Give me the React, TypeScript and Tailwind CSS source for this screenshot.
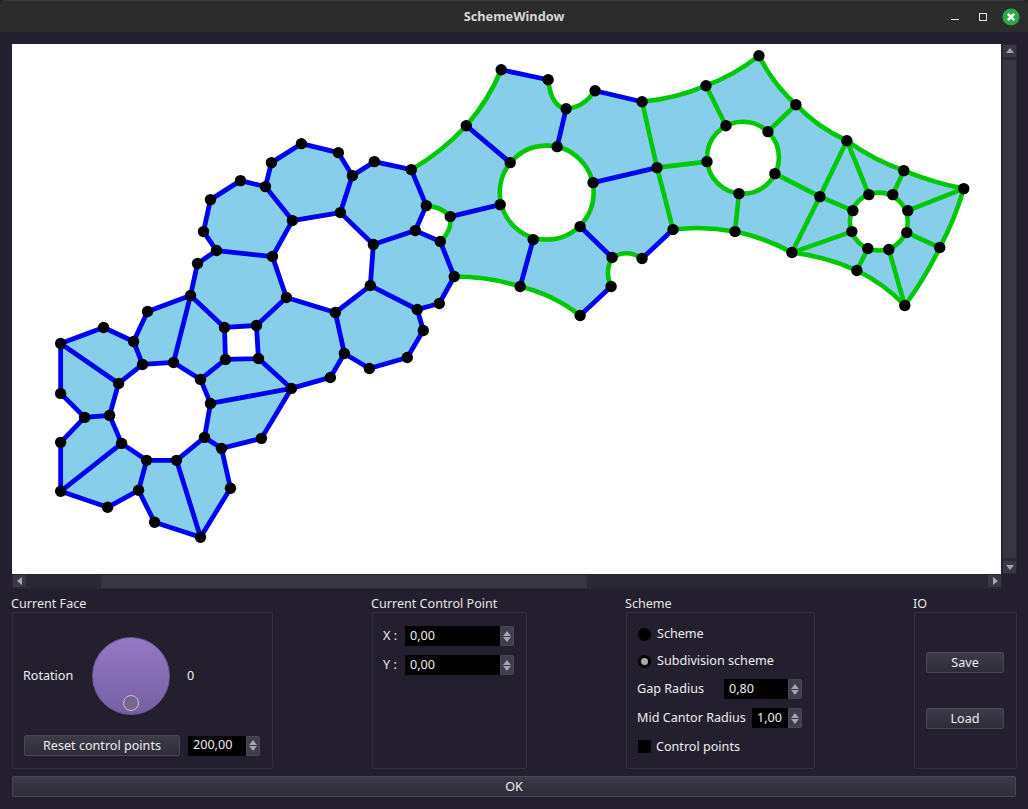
import React from "react";

const FILL =
  "M60 343L103 327L133 341L147 311L190 295L197 263L216 250L203 231L210 199L240 180L265 186L271 162L301 143L338 152L352 175L374 161L411 169Q442 151 466 125Q488 100 501 69L548 79Q551 106 566 108Q583 107 595 90L642 101Q676 98 706 85Q735 74 759 55Q773 83 796 104Q818 127 847 140Q873 159 904 170Q933 182 964 188Q955 219 940 247Q925 278 905 305Q884 283 857 270Q826 256 792 252Q765 237 735 231Q704 225 673 229L642 258Q627 248 612 257Q604 272 611 286L580 315Q553 294 520 286Q489 276 454 276L439 303L417 309L423 330L407 357L369 368L344 353L330 377L291 388L261 438L221 448L230 488L200 537L154 522L138 490L107 507L60 491L60 442L84 417L60 393Z" +
  "M118 383L142 364L173 362L200 379L210 403L204 437L176 460L146 460L121 443L109 415Z" +
  "M292 220L340 212L373 244L370 285L335 312L286 297L272 256Z" +
  "M224 327L256 325L258 358L225 359Z" +
  "M426 205Q441 206 450 216Q452 230 440 241L415 230Z" +
  "M499.500 192A47 47 0 1 0 593.500 192A47 47 0 1 0 499.500 192Z" +
  "M707 157A36 36 0 1 0 779 157A36 36 0 1 0 707 157Z" +
  "M850 221A29 29 0 1 0 908 221A29 29 0 1 0 850 221Z";

const BLUE =
  "M60 491L60 442L84 417L60 393L60 343L103 327L133 341L147 311L190 295L197 263L216 250L203 231L210 199L240 180L265 186L271 162L301 143L338 152L352 175L374 161L411 169L426 205L415 230L440 241L454 276L439 303L417 309L423 330L407 357L369 368L344 353L330 377L291 388L261 438L221 448L230 488L200 537L154 522L138 490L107 507L60 491" +
  "M60 343L118 383L142 364L173 362L200 379L210 403L204 437L176 460L146 460L121 443L109 415L118 383M133 341L142 364M84 417L109 415M121 443L60 491M146 460L138 490M176 460L200 537M204 437L221 448M210 403L291 388M200 379L225 359L258 358L291 388M225 359L224 327L256 325L258 358M224 327L190 295L173 362M256 325L286 297L272 256L292 220L340 212L373 244L370 285L335 312L286 297M272 256L216 250M292 220L265 186M340 212L352 175M373 244L415 230M370 285L417 309M335 312L344 353" +
  "M450 216L500 204M510 162L466 125M501 69L548 79M557 146L566 108M595 90L642 101M593 182L657 167M580 226L612 257M642 258L673 229M533 239L520 286M611 286L580 315";

const GREEN =
  "M411 169Q442 151 466 125Q488 100 501 69M548 79Q551 106 566 108Q583 107 595 90M642 101Q676 98 706 85Q735 74 759 55Q773 83 796 104Q818 127 847 140Q873 159 904 170Q933 182 964 188Q955 219 940 247Q925 278 905 305Q884 283 857 270Q826 256 792 252Q765 237 735 231Q704 225 673 229M612 257Q627 248 642 258M612 257Q604 272 611 286M580 315Q553 294 520 286Q489 276 454 276M426 205Q441 206 450 216Q452 230 440 241" +
  "M642 101L657 167L673 229M657 167L707 161M706 85L726 125M768 131L796 104M775 173L820 196L853 210M847 140L820 196L792 252M847 140L869 194M904 170L893 194M908 210L964 188M907 232L940 247M889 249L905 305M868 248L857 270M852 231L792 252M739 193L735 231";

const DOTS = [
  [60, 343], [103, 327], [133, 341], [147, 311], [190, 295], [224, 327], [256, 325], [225, 359], [258, 358], [286, 297],
  [291, 388], [200, 379], [173, 362], [142, 364], [118, 383], [60, 393], [84, 417], [109, 415], [121, 443], [60, 442],
  [60, 491], [107, 507], [138, 490], [146, 460], [176, 460], [204, 437], [210, 403], [221, 448], [261, 438], [230, 488],
  [200, 537], [154, 522], [301, 143], [338, 152], [352, 175], [374, 161], [411, 169], [426, 205], [415, 230], [440, 241],
  [450, 216], [454, 276], [439, 303], [417, 309], [423, 330], [407, 357], [369, 368], [344, 353], [335, 312], [370, 285],
  [373, 244], [340, 212], [292, 220], [265, 186], [271, 162], [240, 180], [210, 199], [203, 231], [216, 250], [272, 256],
  [197, 263], [330, 377], [501, 69], [548, 79], [566, 108], [595, 90], [642, 101], [657, 167], [673, 229], [642, 258],
  [612, 257], [611, 286], [580, 315], [520, 286], [533, 239], [580, 226], [593, 182], [557, 146], [510, 162], [500, 204],
  [466, 125], [759, 55], [706, 85], [796, 104], [726, 125], [768, 131], [847, 140], [904, 170], [964, 188], [707, 161],
  [775, 173], [739, 193], [820, 196], [869, 194], [893, 194], [908, 210], [853, 210], [852, 231], [907, 232], [868, 248],
  [889, 249], [940, 247], [857, 270], [905, 305], [792, 252], [735, 231],
];

const Arrow = ({ dir }: { dir: "up" | "down" | "left" | "right" }) => {
  const pts = {
    up: "0,6 8,6 4,1",
    down: "0,2 8,2 4,7",
    left: "6,0 6,8 1,4",
    right: "2,0 2,8 7,4",
  }[dir];
  return (
    <svg width="8" height="8" viewBox="0 0 8 8">
      <polygon points={pts} fill="#a5a3ad" />
    </svg>
  );
};

const ScrollButton = ({ dir }: { dir: "up" | "down" | "left" | "right" }) => (
  <div className="w-[15px] h-[14px] shrink-0 flex items-center justify-center bg-[#3a3746] border border-[#2a2734]">
    <Arrow dir={dir} />
  </div>
);

const Spin = ({ value, width }: { value: string; width: string }) => (
  <div className="flex h-[20px]">
    <div className={`${width} bg-black text-[#eeeeee] pl-[5px] flex items-center`}>{value}</div>
    <div className="w-[14px] flex flex-col items-center justify-center gap-[1px] bg-[#3f3c4b] border border-[#4a4757] rounded-r-[2px]">
      <svg width="8" height="5" viewBox="0 0 8 5">
        <polygon points="0,5 8,5 4,0" fill="#a5a3ad" />
      </svg>
      <svg width="8" height="5" viewBox="0 0 8 5">
        <polygon points="0,0 8,0 4,5" fill="#a5a3ad" />
      </svg>
    </div>
  </div>
);

const Button = ({ label, className }: { label: string; className: string }) => (
  <button
    className={`${className} flex items-center justify-center pt-px rounded-[2px] border border-[#4a4757] bg-gradient-to-b from-[#3d3a49] to-[#2f2c3a] text-[#eeeeee]`}
  >
    {label}
  </button>
);

const Group = ({ title, className, children }: { title: string; className: string; children: React.ReactNode }) => (
  <div className={`${className} flex flex-col`}>
    <div className="h-[18px] -ml-px pt-px leading-[18px] text-[#e6e6e6]">{title}</div>
    <div className="h-[157px] border border-[#34313f] rounded-[2px]">{children}</div>
  </div>
);

const Radio = ({ label, checked }: { label: string; checked?: boolean }) => (
  <div className="flex items-center h-[20px]">
    <div className="w-[13px] h-[13px] rounded-full bg-black flex items-center justify-center">
      {checked && <div className="w-[7px] h-[7px] rounded-full bg-[#a9a9a9]" />}
    </div>
    <span className="ml-[6px] pt-px">{label}</span>
  </div>
);

export default function App() {
  return (
    <div
      className="w-[1028px] h-[809px] overflow-hidden flex flex-col bg-[#231f2e] text-[12.600px] text-[#eeeeee]"
      style={{ fontFamily: '"Noto Sans", sans-serif' }}
    >
      <div className="h-[32px] shrink-0 grid grid-cols-[1fr_auto_1fr] items-center bg-[#2c2c2c] border-t border-[#3b3b3b] rounded-t-[6px]">
        <div />
        <div className="font-bold text-[#d8d8d8] text-[12.750px]">SchemeWindow</div>
        <div className="flex items-center justify-end pr-[8px]">
          <div className="w-[8px] h-[1px] mt-[5px] bg-[#e0e0e0]" />
          <div className="w-[8px] h-[8px] ml-[20px] border border-[#e0e0e0]" />
          <svg className="ml-[15px]" width="18" height="18" viewBox="0 0 18 18">
            <circle cx="9" cy="9" r="8.500" fill="#2ba84a" />
            <path d="M5.800 5.800L12.200 12.200M12.200 5.800L5.800 12.200" stroke="#ffffff" strokeWidth="2.400" />
          </svg>
        </div>
      </div>

      <div className="flex-1 flex flex-col pl-[12px] pr-[11px] pt-[12px]">
        <div className="flex h-[530px]">
          <svg className="w-[990px] h-[530px] bg-white" viewBox="11.300 43.500 990 530">
            <path d={FILL} fill="#87ceeb" fillRule="evenodd" />
            <path d={GREEN} fill="none" stroke="#00c800" strokeWidth="4.600" strokeLinejoin="round" />
            <path d={BLUE} fill="none" stroke="#0000f0" strokeWidth="4.800" strokeLinejoin="round" />
            <circle cx="546.500" cy="192" r="47" fill="none" stroke="#00c800" strokeWidth="4.600" />
            <circle cx="743" cy="157" r="36" fill="none" stroke="#00c800" strokeWidth="4.600" />
            <circle cx="879" cy="221" r="29" fill="none" stroke="#00c800" strokeWidth="4.600" />
            {DOTS.map(([x, y]) => (
              <circle key={`${x}-${y}`} cx={x} cy={y} r="5.700" fill="#000000" />
            ))}
          </svg>
          <div className="w-[15px] ml-px flex flex-col bg-[#2a2734]">
            <ScrollButton dir="up" />
            <div className="flex-1 my-px bg-[#393644] border border-[#2a2734]" />
            <ScrollButton dir="down" />
          </div>
        </div>
        <div className="h-[15px] w-[990px] flex bg-[#2a2734]">
          <ScrollButton dir="left" />
          <div className="w-[73px]" />
          <div className="w-[488px] bg-[#393644] border border-[#2a2734]" />
          <div className="flex-1" />
          <ScrollButton dir="right" />
        </div>

        <div className="flex justify-between pt-[5px]">
          <Group title="Current Face" className="w-[261px]">
            <div className="pt-[24px] pl-[10px]">
              <div className="flex items-center">
                <span className="w-[69px] pt-px">Rotation</span>
                <div className="relative w-[78px] h-[78px] rounded-full border border-[#6a5a96] bg-gradient-to-b from-[#9579c5] to-[#7560a3]">
                  <div className="absolute left-[30px] top-[57px] w-[16px] h-[16px] rounded-full bg-[#75688f] border border-[#c8c4d2]" />
                </div>
                <span className="ml-[17px] pt-px">0</span>
              </div>
              <div className="flex items-center mt-[20px] ml-px">
                <Button label="Reset control points" className="w-[156px] h-[21px]" />
                <div className="ml-[8px]">
                  <Spin value="200,00" width="w-[58px]" />
                </div>
              </div>
            </div>
          </Group>

          <Group title="Current Control Point" className="w-[155px]">
            <div className="pt-[13px] pl-[10px] flex flex-col gap-[9px]">
              <div className="flex items-center">
                <span className="w-[22px]">X :</span>
                <Spin value="0,00" width="w-[95px]" />
              </div>
              <div className="flex items-center">
                <span className="w-[22px]">Y :</span>
                <Spin value="0,00" width="w-[95px]" />
              </div>
            </div>
          </Group>

          <Group title="Scheme" className="w-[189px]">
            <div className="pt-[11px] pl-[11px] flex flex-col">
              <Radio label="Scheme" />
              <div className="mt-[7px]">
                <Radio label="Subdivision scheme" checked />
              </div>
              <div className="flex items-center mt-[8px] -ml-px">
                <span className="w-[87px] pt-px">Gap Radius</span>
                <Spin value="0,80" width="w-[64px]" />
              </div>
              <div className="flex items-center mt-[9px] -ml-px">
                <span className="w-[115px] pt-px">Mid Cantor Radius</span>
                <Spin value="1,00" width="w-[36px]" />
              </div>
              <div className="flex items-center mt-[9px]">
                <div className="w-[13px] h-[13px] bg-black" />
                <span className="ml-[5px] pt-px">Control points</span>
              </div>
            </div>
          </Group>

          <Group title="IO" className="w-[103px]">
            <div className="pt-[39px] pl-[11px] flex flex-col gap-[35px]">
              <Button label="Save" className="w-[78px] h-[21px]" />
              <Button label="Load" className="w-[78px] h-[21px]" />
            </div>
          </Group>
        </div>

        <Button label="OK" className="w-[1004px] h-[21px] mt-[7px]" />
      </div>
    </div>
  );
}
